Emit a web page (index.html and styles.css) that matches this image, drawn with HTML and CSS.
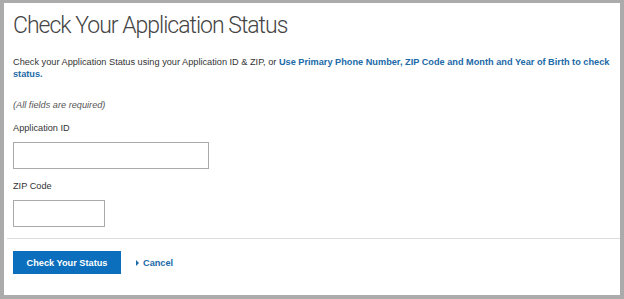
FILE: index.html
```html
<!DOCTYPE html>
<html lang="en">

<head>
    <meta charset="UTF-8">
    <meta name="viewport" content="width=device-width, initial-scale=1.0">
    <title>Check Your Application Status</title>
    <link rel="stylesheet" href="styles.css">
</head>

<body>
    <div class="frame">
        <div class="content">
            <h1>Check Your Application Status</h1>

            <p class="intro">
                <span>Check your Application Status using your Application ID &amp; ZIP, or</span>
                <a href="#" class="link">Use Primary Phone Number, ZIP Code and Month and Year of Birth to check status.</a>
            </p>

            <p class="required">(All fields are required)</p>

            <form id="statusForm">
                <div class="field">
                    <label for="appId">Application ID</label>
                    <input type="text" id="appId" class="input-wide">
                </div>

                <div class="field">
                    <label for="zip">ZIP Code</label>
                    <input type="text" id="zip" class="input-short">
                </div>
            </form>
        </div>

        <div class="actions">
            <button type="submit" form="statusForm" class="status-button">Check Your Status</button>
            <a href="#" class="cancel-link">Cancel</a>
        </div>
    </div>
</body>

</html>
```

FILE: styles.css
```css
:root {
    --frame-color: #ababab;
    --text-color: #333333;
    --title-color: #444444;
    --link-color: #1b6aa8;
    --button-color: #0b6fbd;
    --line-color: #dcdcdc;
}

* {
    box-sizing: border-box;
}

body {
    margin: 0;
    font-family: "Liberation Sans", Arial, sans-serif;
    color: var(--text-color);
    background: #ffffff;
}

.frame {
    width: 624px;
    height: 299px;
    border: 4px solid var(--frame-color);
    border-top-width: 3px;
    background: #ffffff;
    display: flex;
    flex-direction: column;
}

.content {
    padding: 0 9px;
}

h1 {
    margin: 9px 0 0;
    font-family: Roboto, "Liberation Sans", sans-serif;
    font-weight: 300;
    font-size: 23px;
    line-height: 28px;
    letter-spacing: -1px;
    color: var(--title-color);
}

.intro {
    margin: 16px 0 0;
    font-size: 9.2px;
    line-height: 12px;
}

.link {
    color: var(--link-color);
    font-weight: bold;
    text-decoration: none;
}

.required {
    margin: 19px 0 0;
    font-size: 9.2px;
    line-height: 12px;
    font-style: italic;
    color: #555555;
}

.field {
    margin-top: 11px;
}

.field label {
    display: block;
    font-size: 9.2px;
    line-height: 12px;
    margin-bottom: 8px;
}

.field input {
    display: block;
    height: 27px;
    border: 1px solid #a9a9a9;
    border-radius: 0;
    padding: 4px 6px;
    font-family: inherit;
}

.input-wide {
    width: 196px;
}

.input-short {
    width: 92px;
}

.actions {
    margin: 11px 0 0 3px;
    padding: 12px 0 0 6px;
    border-top: 1px solid var(--line-color);
    display: flex;
    align-items: center;
    gap: 15px;
}

.status-button {
    background-color: var(--button-color);
    color: #ffffff;
    border: none;
    width: 108px;
    height: 23px;
    padding: 0;
    font-family: inherit;
    font-size: 9.2px;
    font-weight: bold;
    cursor: pointer;
}

.cancel-link {
    color: var(--link-color);
    font-size: 9.2px;
    font-weight: bold;
    text-decoration: none;
}

.cancel-link::before {
    content: "";
    display: inline-block;
    border-left: 3px solid var(--link-color);
    border-top: 3px solid transparent;
    border-bottom: 3px solid transparent;
    margin-right: 4px;
    vertical-align: 0;
}
```
